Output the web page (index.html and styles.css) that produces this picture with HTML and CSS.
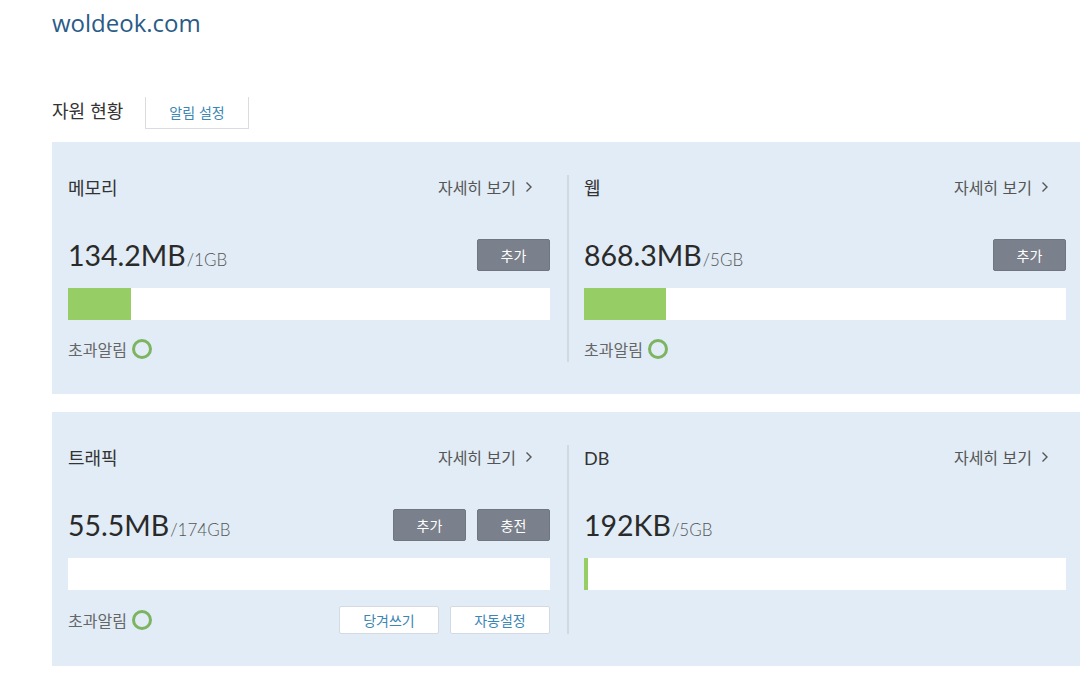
FILE: index.html
```html
<!DOCTYPE html>
<html lang="ko">
<head>
<meta charset="utf-8">
<title>woldeok.com</title>
<link rel="stylesheet" href="styles.css">
</head>
<body>
<div class="page">
  <h1 class="site">woldeok.com</h1>
  <div class="tabs">
    <span class="tab-title">자원 현황</span>
    <span class="tab-btn">알림 설정</span>
  </div>

  <section class="panel">
    <div class="col">
      <div class="head"><span class="name">메모리</span><span class="more">자세히 보기<svg class="chev" viewBox="0 0 8 12"><path d="M1.5 1.5 L6 6 L1.5 10.5"/></svg></span></div>
      <div class="usage"><span class="num">134.2MB</span><span class="total">/1GB</span><span class="btns"><span class="btn">추가</span></span></div>
      <div class="bar"><div class="fill" style="width:13%"></div></div>
      <div class="foot"><span class="alert">초과알림 <span class="ring"></span></span></div>
    </div>
    <div class="col col-right">
      <div class="head"><span class="name">웹</span><span class="more">자세히 보기<svg class="chev" viewBox="0 0 8 12"><path d="M1.5 1.5 L6 6 L1.5 10.5"/></svg></span></div>
      <div class="usage"><span class="num">868.3MB</span><span class="total">/5GB</span><span class="btns"><span class="btn">추가</span></span></div>
      <div class="bar"><div class="fill" style="width:17%"></div></div>
      <div class="foot"><span class="alert">초과알림 <span class="ring"></span></span></div>
    </div>
  </section>

  <section class="panel">
    <div class="col">
      <div class="head"><span class="name">트래픽</span><span class="more">자세히 보기<svg class="chev" viewBox="0 0 8 12"><path d="M1.5 1.5 L6 6 L1.5 10.5"/></svg></span></div>
      <div class="usage"><span class="num">55.5MB</span><span class="total">/174GB</span><span class="btns"><span class="btn">추가</span><span class="btn">충전</span></span></div>
      <div class="bar"></div>
      <div class="foot"><span class="alert">초과알림 <span class="ring"></span></span><span class="btns"><span class="wbtn">당겨쓰기</span><span class="wbtn">자동설정</span></span></div>
    </div>
    <div class="col col-right">
      <div class="head"><span class="name name-en">DB</span><span class="more">자세히 보기<svg class="chev" viewBox="0 0 8 12"><path d="M1.5 1.5 L6 6 L1.5 10.5"/></svg></span></div>
      <div class="usage"><span class="num">192KB</span><span class="total">/5GB</span></div>
      <div class="bar"><div class="fill" style="width:4px"></div></div>
      <div class="foot"></div>
    </div>
  </section>
</div>
</body>
</html>
```

FILE: styles.css
```css
* { box-sizing: border-box; }
html, body { margin: 0; padding: 0; background: #fff; overflow: hidden; }
body {
  font-family: Lato, "Noto Sans CJK KR", sans-serif;
  color: #333;
  width: 1080px;
}
.page { padding-left: 52px; }
.site {
  margin: 0;
  padding-top: 8px;
  height: 97px;
  font-family: "Open Sans", "Noto Sans", sans-serif;
  font-weight: 400;
  font-size: 24px;
  line-height: 30px;
  color: #2b5b87;
}
.tabs {
  display: flex;
  align-items: center;
  height: 31px;
  margin-bottom: 14px;
}
.tab-title {
  font-family: "Noto Sans CJK KR", sans-serif;
  font-size: 18px;
  color: #333;
  width: 93px;
  position: relative;
  top: -3px;
}
.tab-btn {
  display: flex;
  align-items: center;
  justify-content: center;
  width: 104px;
  height: 32px;
  border: 1px solid #dcdcdc;
  border-top: none;
  font-family: "Noto Sans CJK KR", sans-serif;
  font-size: 14px;
  color: #3b86b3;
}
.panel {
  display: flex;
  background: #e1ecf6;
  padding: 33px 14px 32px 16px;
  margin-bottom: 18px;
}
.col {
  width: 499px;
  padding-right: 17px;
  display: flex;
  flex-direction: column;
}
.col-right {
  width: 499px;
  padding-left: 15px;
  padding-right: 0;
  border-left: 2px solid #d1d9e1;
}
.head {
  display: flex;
  justify-content: space-between;
  align-items: center;
  height: 24px;
  padding-right: 17px;
}
.name {
  font-family: "Noto Sans CJK KR", sans-serif;
  font-size: 18px;
  color: #333;
}
.name-en { font-family: Lato, sans-serif; font-size: 18px; padding-top: 2px; }
.more {
  display: flex;
  align-items: center;
  font-family: "Noto Sans CJK KR", sans-serif;
  font-size: 16px;
  color: #555;
}
.chev {
  width: 8px;
  height: 12px;
  margin-left: 9px;
  fill: none;
  stroke: #555;
  stroke-width: 1.4;
}
.usage {
  display: flex;
  align-items: baseline;
  height: 32px;
  margin-top: 40px;
}
.num {
  font-family: Lato, sans-serif;
  font-size: 28.5px;
  color: #2a2a2a;
  line-height: 32px;
}
.total {
  font-family: Lato, sans-serif;
  font-size: 17px;
  font-weight: 300;
  color: #555;
  margin-left: 1px;
}
.btns {
  margin-left: auto;
  display: flex;
  gap: 11px;
  align-self: center;
}
.btn {
  display: flex;
  align-items: center;
  justify-content: center;
  width: 73px;
  height: 32px;
  background: #7a808c;
  border: 1px solid #70767f;
  border-radius: 2px;
  color: #fff;
  font-family: "Noto Sans CJK KR", sans-serif;
  font-size: 14px;
}
.bar {
  height: 32px;
  background: #fff;
  margin-top: 17px;
}
.fill {
  height: 100%;
  background: #96cd64;
}
.foot {
  display: flex;
  align-items: center;
  min-height: 26px;
  margin-top: 16px;
}
.alert {
  display: flex;
  align-items: center;
  font-family: "Noto Sans CJK KR", sans-serif;
  font-size: 16px;
  color: #666;
}
.ring {
  display: inline-block;
  width: 20px;
  height: 20px;
  border: 3px solid #7cb462;
  border-radius: 50%;
  margin-left: 5px;
}
.wbtn {
  display: flex;
  align-items: center;
  justify-content: center;
  width: 100px;
  height: 28px;
  background: #fff;
  border: 1px solid #d3dae1;
  border-radius: 2px;
  color: #3b86b3;
  font-family: "Noto Sans CJK KR", sans-serif;
  font-size: 14px;
}
```
